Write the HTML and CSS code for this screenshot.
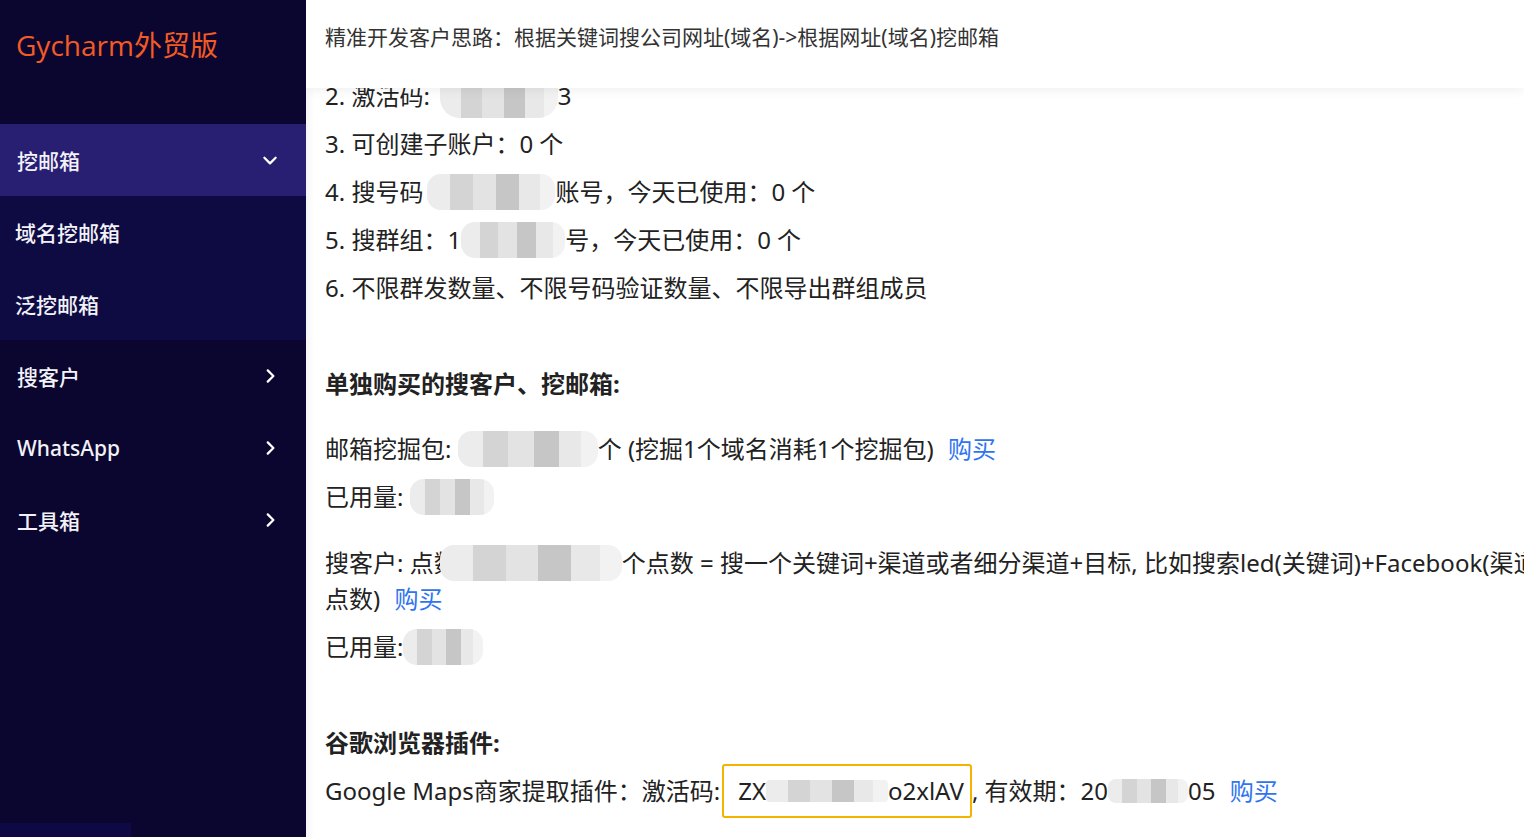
FILE: index.html
```html
<!DOCTYPE html>
<html lang="zh-CN">
  <head>
    <meta charset="utf-8">
    <title>Gycharm外贸版</title>
    <link rel="stylesheet" href="styles.css">
  </head>
  <body>
    <div class="layout">
      <div class="sidebar">
        <div class="logo">Gycharm外贸版</div>
        <div class="menu">
          <div class="menu-item active">
            <span>挖邮箱</span>
            <svg class="chev" viewBox="0 0 16 16"><path d="M3 6l5 5 5-5" /></svg>
          </div>
          <div class="submenu">
            <div class="sub-item">域名挖邮箱</div>
            <div class="sub-item">泛挖邮箱</div>
          </div>
          <div class="menu-item">
            <span>搜客户</span>
            <svg class="chev" viewBox="0 0 16 16"><path d="M6 3l5 5-5 5" /></svg>
          </div>
          <div class="menu-item">
            <span>WhatsApp</span>
            <svg class="chev" viewBox="0 0 16 16"><path d="M6 3l5 5-5 5" /></svg>
          </div>
          <div class="menu-item">
            <span>工具箱</span>
            <svg class="chev" viewBox="0 0 16 16"><path d="M6 3l5 5-5 5" /></svg>
          </div>
        </div>
        <div class="side-foot"></div>
      </div>

      <div class="main">
        <div class="topbar">精准开发客户思路：根据关键词搜公司网址(域名)-&gt;根据网址(域名)挖邮箱</div>

        <div class="content">
          <div class="row">2. 激活码:<span class="mask mask-code"></span>3</div>
          <div class="row">3. 可创建子账户：0 个</div>
          <div class="row">4. 搜号码<span class="mask mask-phone"></span>账号，今天已使用：0 个</div>
          <div class="row">5. 搜群组：1<span class="mask mask-group"></span>号，今天已使用：0 个</div>
          <div class="row">6. 不限群发数量、不限号码验证数量、不限导出群组成员</div>

          <div class="section-title">单独购买的搜客户、挖邮箱:</div>

          <div class="group">
            <div class="row">邮箱挖掘包: <span class="mask mask-pack"></span>个 (挖掘1个域名消耗1个挖掘包) <a class="buy" href="#">购买</a></div>
            <div class="row">已用量: <span class="mask mask-used"></span></div>
          </div>

          <div class="group">
            <div class="row">搜客户: 点数<span class="mask mask-points"></span>个点数 = 搜一个关键词+渠道或者细分渠道+目标, 比如搜索led(关键词)+Facebook(渠道)+美国(目标)消耗1个<br>点数) <a class="buy" href="#">购买</a></div>
            <div class="row">已用量:<span class="mask mask-used2"></span></div>
          </div>

          <div class="section-title plugin">谷歌浏览器插件:</div>
          <div class="row">Google Maps商家提取插件：激活码:<span class="code-box">ZX<span class="mask mask-key"></span>o2xlAV</span>, 有效期：20<span class="mask mask-date"></span>05 <a class="buy" href="#">购买</a></div>
        </div>
      </div>
    </div>
  </body>
</html>
```

FILE: styles.css
```css
html, body
{
    margin: 0;
    padding: 0;
    height: 100%;
}

body
{
    font-family: "Noto Sans", "Noto Sans CJK SC", sans-serif;
    color: #222;
    background: #fff;
}

.layout
{
    display: flex;
    height: 837px;
    overflow: hidden;
}

/* sidebar */

.sidebar
{
    width: 306px;
    flex: none;
    background: #0b0630;
    display: flex;
    flex-direction: column;
}

.logo
{
    height: 124px;
    box-sizing: border-box;
    padding: 24px 0 0 16px;
    font-size: 28px;
    color: #f35a24;
    font-family: "Open Sans", "Noto Sans CJK SC", sans-serif;
}

.menu-item
{
    height: 72px;
    display: flex;
    align-items: center;
    justify-content: space-between;
    padding: 0 27px 0 17px;
    color: #f2f2f8;
    font-size: 21px;
    font-weight: 500;
}

.menu-item.active { background: #281f73; }

.submenu { background: #0e0a42; }

.sub-item
{
    height: 72px;
    display: flex;
    align-items: center;
    padding-left: 15px;
    color: #f2f2f8;
    font-size: 21px;
    font-weight: 500;
}

.chev
{
    width: 18px;
    height: 18px;
    fill: none;
    stroke: #fff;
    stroke-width: 2;
    stroke-linecap: round;
    stroke-linejoin: round;
}

.side-foot
{
    margin-top: auto;
    width: 131px;
    height: 14px;
    background: #0e0944;
}

/* main */

.main
{
    flex: 1;
    position: relative;
    overflow: hidden;
    min-width: 0;
    box-shadow: inset 8px 0 8px -6px rgba(0, 0, 0, 0.06);
}

.topbar
{
    position: absolute;
    top: 0;
    left: 0;
    right: 0;
    height: 88px;
    z-index: 2;
    background: #fff;
    box-shadow: 0 3px 10px rgba(0, 0, 0, 0.06);
    box-sizing: border-box;
    padding: 21px 0 0 19px;
    font-size: 21px;
    color: #333;
}

.content
{
    padding: 78px 0 0 19px;
    font-size: 24px;
    white-space: nowrap;
}

.row
{
    line-height: 36px;
    margin-bottom: 12px;
}

.section-title
{
    font-weight: bold;
    line-height: 36px;
    margin: 60px 0 29px;
}

.section-title.plugin { margin: 60px 0 12px; }

.group { margin-bottom: 30px; }

.buy
{
    margin-left: 8px;
    color: #2f74f0;
    text-decoration: none;
}

.mask
{
    display: inline-block;
    height: 36px;
    vertical-align: top;
    border-radius: 14px;
    background: linear-gradient(90deg, #ececec 0 18%, #d4d4d4 18% 36%, #e3e3e3 36% 54%, #c6c6c6 54% 72%, #e8e8e8 72% 88%, #f2f2f2 88%);
}

.mask-code
{
    width: 118px;
    height: 54px;
    margin: -14px 0 -18px 10px;
    border-radius: 20px;
}
.mask-phone { width: 128px; margin-left: 4px; }
.mask-group { width: 104px; }
.mask-pack { width: 140px; }
.mask-used { width: 84px; }
.mask-points { width: 182px; margin-left: -18px; }
.mask-used2 { width: 80px; }
.mask-key
{
    width: 122px;
    height: 22px;
    margin-top: 14px;
    border-radius: 4px;
}
.mask-date
{
    width: 80px;
    height: 24px;
    margin-top: 6px;
    border-radius: 8px;
}

.code-box
{
    display: inline-block;
    line-height: 50px;
    margin: -9px 0 -9px 2px;
    padding: 0 6px 0 14px;
    border: 2px solid #f5b300;
    border-radius: 3px;
    vertical-align: top;
}
```
